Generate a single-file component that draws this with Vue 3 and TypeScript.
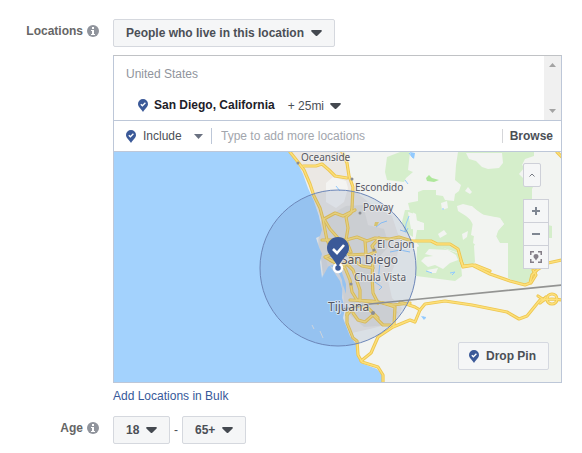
<script setup lang="ts">
import { ref } from 'vue'

interface Place {
  name: string
  x: number
  y: number
  size: number
}

const audience = ref('People who live in this location')
const mode = ref('Include')
const query = ref('')
const ageMin = ref('18')
const ageMax = ref('65+')

const places: Place[] = [
  { name: 'Oceanside', x: 301, y: 161, size: 10 },
  { name: 'Escondido', x: 355, y: 191, size: 10 },
  { name: 'Poway', x: 363, y: 211, size: 10 },
  { name: 'El Cajon', x: 377, y: 248, size: 10 },
  { name: 'San Diego', x: 341, y: 264, size: 12 },
  { name: 'Chula Vista', x: 354, y: 281, size: 10 },
  { name: 'Tijuana', x: 328, y: 311, size: 12 },
]

const towns: [number, number, number][] = [
  [298, 163, 1.5], [352, 179, 1.5], [360, 213, 1.5],
  [374, 250, 1.5], [351, 284, 1.5], [373, 313, 2],
]

const roads: string[] = [
  'M290 152L298 162L304 170L310 184L314 196L320 208L323 219L325 230L327 240L334 254L342 268',
  'M303 166L316 166L322 164L329 170L335 176L347 178',
  'M342 152L347 163L349 176L353 187L352 208L351 213L346 217L348 228L346 240L351 252',
  'M324 219L335 213L343 216L355 210',
  'M324 219L330 229L338 238L342 246',
  'M322 240L346 240L357 237L367 241L375 238L390 239L399 237L412 241L431 241L437 244L450 244L458 249L463 267L475 265L490 271',
  'M365 241L366 254L350 255L343 251L325 257L332 261L345 266',
  'M379 238L372 246L375 252L366 256',
  'M330 260L345 268L350 280L352 292L357 300L378 303',
  'M345 262L353 270L360 290L360 301',
  'M373 260L372 277L373 293L378 303',
  'M350 258L362 266L373 268',
  'M350 300L372 301L393 305L410 303',
  'M347 313L347 323L353 338L357 341L358 355L362 362L378 367L383 375L383 383',
  'M361 361L371 353L378 337L393 327L410 320L415 322L420 310',
  'M353 313L358 320L365 322L373 315L383 325L394 325L395 307L383 303',
  'M347 315L355 306L368 308L378 318',
  'M400 302L415 307L420 310L425 304L445 301L472 305L507 312L519 319L527 316L540 300L552 299L562 300',
  'M461 261L463 266L472 265L490 274L510 281L525 285L530 283L532 275L537 270L548 263L562 260',
  'M531 283L536 275L533 270',
  'M538 296L544 300L540 303L546 297',
  'M547 299a5 5 0 1 0 10 0a5 5 0 1 0 -10 0',
  'M557 152L562 157',
]
</script>

<template>
  <main class="page">
    <svg class="defs" aria-hidden="true">
      <symbol id="pin" viewBox="0 0 10 13">
        <path d="M5 0a5 5 0 0 1 5 5c0 3-3 4.500-5 8c-2-3.500-5-5-5-8a5 5 0 0 1 5-5z" fill="#3b5998" />
        <path d="M2.800 5.200L4.400 6.800L7.400 3.700" fill="none" stroke="#fff" stroke-width="1.300" />
      </symbol>
      <symbol id="caret" viewBox="0 0 11 6">
        <path d="M1 0h9a1 1 0 0 1 .6 1.500L6.500 5.600a1.400 1.400 0 0 1-2 0L.4 1.500A1 1 0 0 1 1 0z" fill="currentColor" />
      </symbol>
      <symbol id="info" viewBox="0 0 12 12">
        <circle cx="6" cy="6" r="6" fill="#90949c" />
        <path d="M5 2h2v2H5zM4 5h3v4h1v1H4V9h1V6H4z" fill="#fff" />
      </symbol>
    </svg>

    <section class="row">
      <div class="caption">
        <label for="audience">Locations</label>
        <svg class="info"><use href="#info" /></svg>
      </div>
      <div class="content">
        <div class="drop">
          <select id="audience" v-model="audience">
            <option>People who live in this location</option>
          </select>
          <svg class="caret"><use href="#caret" /></svg>
        </div>

        <div class="panel">
          <div class="chosen">
            <div class="list">
              <div class="country">United States</div>
              <div class="city">
                <svg class="pin"><use href="#pin" /></svg>
                <strong>San Diego, California</strong>
                <button type="button" class="radius">
                  + 25mi
                  <svg class="caret"><use href="#caret" /></svg>
                </button>
              </div>
            </div>
            <div class="track" aria-hidden="true">
              <svg viewBox="0 0 7 4"><path d="M3.500 0L7 4H0z" fill="#a3a3a3" /></svg>
              <svg viewBox="0 0 7 4"><path d="M0 0H7L3.500 4z" fill="#a3a3a3" /></svg>
            </div>
          </div>

          <div class="search">
            <svg class="pin"><use href="#pin" /></svg>
            <div class="mode">
              <select v-model="mode" aria-label="Include or exclude">
                <option>Include</option>
              </select>
              <svg class="small-caret" viewBox="0 0 9 5"><path d="M0 0H9L4.500 5z" fill="#6a7180" /></svg>
            </div>
            <input v-model="query" type="text" placeholder="Type to add more locations" aria-label="Add locations" />
            <button type="button" class="browse">Browse</button>
          </div>

          <div class="map">
            <svg class="canvas" viewBox="114 152 447 230" preserveAspectRatio="xMidYMid slice" role="img" aria-label="Map of San Diego">
              <rect x="114" y="152" width="447" height="230" fill="#f2f4f1" />
              <path d="M290 152H345L350 175L356 192L372 205L392 216L400 240L396 262L388 280L392 298L402 308L396 322L374 328L352 333L342 300L322 260L318 240L321 220L306 180z" fill="#ebe8e4" />
              <path d="M326 183L333 177L346 181L348 188L344 202L336 208L326 202z" fill="#f4f4f2" />
              <path d="M321 220L346 206L363 205L368 225L384 229L389 246L374 263L371 292L385 305L398 312L390 325L364 327L345 311L342 282L317 255z" fill="#dddbd7" opacity=".7" />

              <g fill="#d5eecb">
                <path d="M458 152L456 165L455 180L461 185L459 191L455 194L454 201L445 200L443 196L436 195V190H423L418 192V201L408 203L410 211L416 214L417 221L424 223V230H417L415 241L420 247L433 245L450 250L459 253L462 267L472 266L475 262L474 246L479 238L471 235L473 222L466 216L458 211L457 206L472 206L480 214L500 218L504 224L498 231L496 237L500 244H508V278L522 285L532 280L538 264L549 258V238H552V226L548 225V206H532V189L534 185V175L522 165L525 159L534 156V152z" />
                <path d="M417 247L430 242L448 250L460 254L462 276L455 281L432 278L416 276z" />
                <path d="M387 157L400 152H410L408 170L413 172L406 178L404 182L387 180L385 172z" />
                <path d="M405 210H413V237L405 232L402 222z" />
              </g>
              <path d="M426 178L429 175L432 178L439 180L434 182L427 181z" fill="#afe79c" />
              <g fill="#f2f4f1">
                <path d="M466 153H502L503 163L499 168L488 169L482 167L476 161L469 159z" />
                <path d="M465 191L468 187L472 192L470 194z" />
                <path d="M457 206L463 204L471 206L478 211L485 216L500 218L504 224L498 230L496 236L500 243H508V278L500 275L484 264L478 247L473 243L475 228L468 216z" />
                <path d="M462 234L468 231L467 237L463 240z" />
                <path d="M438 234L444 230L447 234L440 238z" />
                <path d="M441 203L447 201L448 208L442 210z" />
                <path d="M408 212L415 214L416 220L423 223V230L411 229z" />
                <path d="M429 249L448 250L456 255L458 260L450 263L443 269L435 265L428 267L421 261L425 257L433 256L425 254z" />
                <path d="M427 270L438 268L436 273L430 273z" />
                <path d="M519 174L524 168L532 170L530 181L525 180z" />
              </g>

              <path d="M114 152H289L297 162L303 174L308 188L314 201L319 216L322 230L320 236L316 238L319 247L322 254L320 262L322 278L325 268L332 265L339 268L343 281L342 298L345 308L343 318L350 336L356 344L357 355L361 363L377 369L382 375V382H114z" fill="#a3d2fd" />
              <path d="M327 247L333 245L334 249L328 250z" fill="#a3d2fd" />
              <path d="M336 271L341 270L346 284L346 294L344 288L341 280z" fill="#a3d2fd" />
              <path d="M330 266L337 269L342 280L343 292L340 281L334 272z" fill="#dfe2e4" />
              <path d="M321 258L325 256L328 267L323 276z" fill="#d8dbdd" />
              <g fill="none" stroke="#91caff" stroke-width="1">
                <path d="M409 153L413 158M405 180L408 184M405 232L406 224L409 216M400 230L406 232L408 228M380 262L378 282M387 221L381 223L376 227M336 186L340 191M372 280L382 287L379 290M390 252L400 250L410 252M443 208V210M426 271L432 273M450 273L455 272L452 275M423 317L426 318" />
              </g>
              <path d="M410 152L415 153L414 159L411 156zM421 316L426 317L424 320z" fill="#91caff" />
              <path d="M374 226L375 222L379 222L377 226z" fill="#edd26b" />
              <path d="M312 325L314 329M320 331L323 338" fill="none" stroke="#e1e5e7" />

              <g fill="none" stroke-linejoin="round" stroke-linecap="round">
                <path v-for="road in roads" :key="'edge' + road" :d="road" stroke="#edc650" stroke-width="3.200" />
                <path v-for="road in roads" :key="'fill' + road" :d="road" stroke="#fde07a" stroke-width="1.400" />
              </g>
              <path d="M343 309L370 304L410 300L562 285" fill="none" stroke="#939492" stroke-width="1.600" />

              <circle cx="338" cy="268" r="78" fill="#3b5998" fill-opacity=".13" stroke="#6c86b8" />

              <circle v-for="[x, y, r] in towns" :key="`${x}-${y}`" :cx="x" :cy="y" :r="r" fill="#8b8d93" />
              <text v-for="place in places" :key="place.name" class="place" :x="place.x" :y="place.y" :font-size="place.size">{{ place.name }}</text>

              <circle cx="338" cy="268" r="4" fill="#3b5998" stroke="#fff" stroke-width="2.500" />
              <path d="M338 237a11 11 0 0 1 11 11c0 7-8 11-11 20c-3-9-11-13-11-20a11 11 0 0 1 11-11z" fill="#3b5998" />
              <path d="M333 249L337 253L344 245" fill="none" stroke="#fff" stroke-width="2.600" />
            </svg>

            <div class="controls">
              <button type="button" class="fold" aria-label="Collapse map">
                <svg width="6" height="4" viewBox="0 0 6 4"><path d="M.5 3.500L3 1L5.500 3.500" fill="none" stroke="#777b83" /></svg>
              </button>
              <div class="zoom">
                <button type="button" aria-label="Zoom in">
                  <svg width="8" height="8" viewBox="0 0 8 8"><path d="M3 0h2v3h3v2H5v3H3V5H0V3h3z" fill="#7f8692" /></svg>
                </button>
                <button type="button" aria-label="Zoom out">
                  <svg width="8" height="8" viewBox="0 0 8 8"><path d="M0 3h8v2H0z" fill="#7f8692" /></svg>
                </button>
                <button type="button" aria-label="Center on pin">
                  <svg width="12" height="12" viewBox="0 0 12 12">
                    <path d="M.75 4V.75H4M8 .75h3.250V4M11.250 8v3.250H8M4 11.250H.75V8" fill="none" stroke="#857f88" stroke-width="1.500" />
                    <path d="M6 3a2.500 2.500 0 0 1 2.500 2.500C8.500 7 7 7.500 6 9.500C5 7.500 3.500 7 3.500 5.500A2.500 2.500 0 0 1 6 3z" fill="#857f88" />
                  </svg>
                </button>
              </div>
            </div>
            <button type="button" class="drop-pin">
              <svg class="pin"><use href="#pin" /></svg>
              Drop Pin
            </button>
          </div>
        </div>

        <a class="bulk" href="#bulk">Add Locations in Bulk</a>
      </div>
    </section>

    <section class="row">
      <div class="caption">
        <label for="age-min">Age</label>
        <svg class="info"><use href="#info" /></svg>
      </div>
      <div class="ages">
        <div class="drop">
          <select id="age-min" v-model="ageMin">
            <option v-for="age in ['18', '21', '25', '35']" :key="age">{{ age }}</option>
          </select>
          <svg class="caret"><use href="#caret" /></svg>
        </div>
        <span>-</span>
        <div class="drop">
          <select v-model="ageMax" aria-label="Maximum age">
            <option v-for="age in ['45', '55', '65+']" :key="age">{{ age }}</option>
          </select>
          <svg class="caret"><use href="#caret" /></svg>
        </div>
      </div>
    </section>
  </main>
</template>

<style>
body {
  background: #fff;
}
</style>

<style scoped>
.page {
  display: grid;
  gap: 12px;
  padding: 19px 20px 9px 0;
  font: 12px/16px "Liberation Sans", Arial, sans-serif;
  color: #4b4f56;
}
.defs {
  position: absolute;
  width: 0;
  height: 0;
}
button,
select,
input {
  box-sizing: border-box;
  margin: 0;
  padding: 0;
  border: 0;
  border-radius: 0;
  background: none;
  color: inherit;
  font: inherit;
}
select {
  appearance: none;
}
.row {
  display: grid;
  grid-template-columns: 99px minmax(0, 1fr);
  gap: 14px;
}
.caption {
  display: flex;
  align-items: center;
  justify-content: flex-end;
  gap: 4px;
  height: 24px;
  font-weight: bold;
  color: #666;
}
.info {
  width: 12px;
  height: 12px;
}
.content {
  display: flex;
  flex-direction: column;
  align-items: flex-start;
}
.drop,
.mode {
  display: inline-grid;
  align-items: center;
}
.drop > *,
.mode > * {
  grid-area: 1 / 1;
}
.drop > svg,
.mode > svg {
  justify-self: end;
  pointer-events: none;
}
.drop select {
  height: 28px;
  padding: 0 29px 0 12px;
  border: 1px solid #d5d8de;
  border-radius: 2px;
  background: #f5f6f7;
  font-weight: bold;
}
.caret {
  width: 11px;
  height: 6px;
  color: #444950;
}
.drop .caret {
  margin-right: 13px;
}
.panel {
  box-sizing: border-box;
  width: 100%;
  margin-top: 8px;
  border: 1px solid #bdc7d8;
  border-top-color: #c0c2c5;
}
.chosen {
  display: flex;
  justify-content: space-between;
  height: 64px;
  border-bottom: 1px solid #bdc7d8;
}
.list {
  padding: 10px 12px 0;
}
.country {
  color: #90949c;
}
.city {
  display: flex;
  align-items: center;
  gap: 6px;
  padding: 14px 0 0 12px;
}
.city strong {
  color: #1d2129;
}
.pin {
  flex: none;
  width: 10px;
  height: 13px;
}
.radius {
  display: flex;
  align-items: center;
  gap: 6px;
  margin-left: 7px;
  padding-top: 2px;
}
.track {
  box-sizing: border-box;
  display: flex;
  flex-direction: column;
  align-items: center;
  justify-content: space-between;
  width: 17px;
  padding: 7px 0;
  background: #f0f0f0;
}
.track svg {
  width: 7px;
  height: 4px;
}
.search {
  display: flex;
  align-items: center;
  height: 30px;
  padding: 0 8px 0 12px;
  border-bottom: 1px solid #bdc7d8;
}
.mode {
  margin: 0 8px 0 7px;
}
.mode select {
  padding-right: 21px;
}
.small-caret {
  width: 9px;
  height: 5px;
}
.search input {
  flex: 1;
  min-width: 0;
  padding-left: 9px;
  border-left: 1px solid #bdc7d8;
}
.search input::placeholder {
  color: #a2a6ad;
}
.browse {
  height: 14px;
  padding-left: 7px;
  border-left: 1px solid #d5d6d9;
  font-weight: bold;
  line-height: 14px;
}
.map {
  position: relative;
  height: 230px;
  overflow: hidden;
}
.canvas {
  display: block;
  width: 100%;
  height: 100%;
}
.place {
  font-family: "Noto Sans", sans-serif;
  fill: #555661;
  stroke: #f2f3f3;
  stroke-opacity: .6;
  stroke-width: 2px;
  stroke-linejoin: round;
  paint-order: stroke;
}
.controls {
  position: absolute;
  top: 11px;
  right: 12px;
  display: flex;
  flex-direction: column;
  gap: 12px;
}
.controls button {
  display: grid;
  place-items: center;
  width: 26px;
  height: 24px;
  border: 1px solid #ced0d8;
  background: #f5f6f7;
}
.controls .fold {
  width: 18px;
  border-radius: 2px;
}
.zoom {
  display: grid;
}
.zoom button + button {
  margin-top: -1px;
}
.drop-pin {
  position: absolute;
  right: 12px;
  bottom: 12px;
  display: flex;
  align-items: center;
  gap: 7px;
  height: 28px;
  padding: 0 12px 0 10px;
  border: 1px solid #d5d8e0;
  border-radius: 2px;
  background: #f5f6f7;
  font-weight: bold;
}
.bulk {
  margin-top: 5px;
  color: #365899;
  text-decoration: none;
}
.ages {
  display: flex;
  align-items: center;
  gap: 4px;
}
</style>
